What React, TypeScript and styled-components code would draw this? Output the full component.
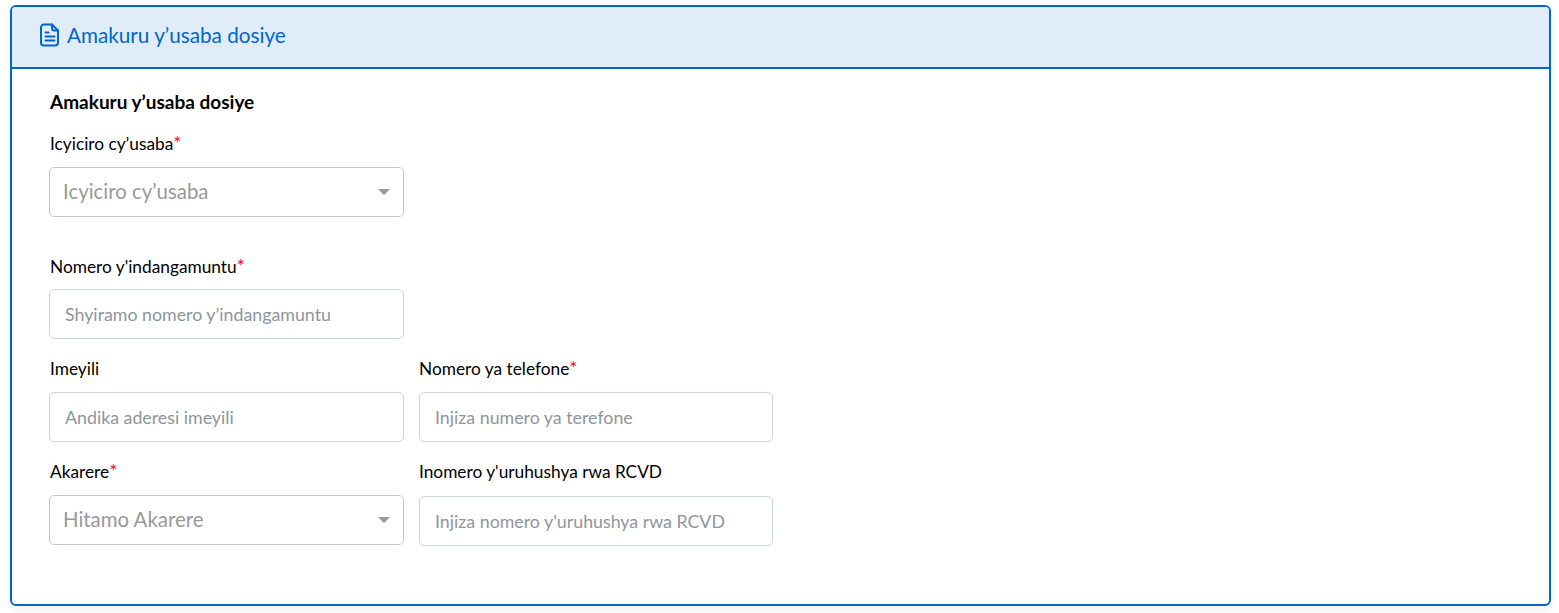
import React from "react";
import styled, { createGlobalStyle } from "styled-components";

const Global = createGlobalStyle`
  html, body { margin: 0; padding: 0; background: #fff; }
  body { font-family: "Lato", "Open Sans", sans-serif; color: #000; }
  * { box-sizing: border-box; }
`;

const Page = styled.div`
  width: 1559px;
  height: 613px;
  padding: 5px 8px 7px 10px;
`;

const Card = styled.section`
  height: 601px;
  border: 2px solid #0066cc;
  border-radius: 6px;
  box-shadow: 0 4px 8px rgba(0, 0, 0, 0.06);
  overflow: hidden;
`;

const CardHeader = styled.header`
  height: 62px;
  border-bottom: 2px solid #0066cc;
  background: #e0ecf8;
  display: flex;
  align-items: center;
  gap: 6px;
  padding: 0 0 4px 27px;
  color: #0066cc;
  font-size: 20.7px;
`;

const CardBody = styled.div`
  padding: 22px 37px 0;
`;

const SectionTitle = styled.h2`
  margin: 0 0 21px 1px;
  font-size: 19px;
  line-height: 22px;
  font-weight: 700;
`;

const Row = styled.div<{ $gap: number }>`
  display: grid;
  grid-template-columns: 355px 354px;
  column-gap: 15px;
  margin-bottom: ${(p) => p.$gap}px;
`;

const Field = styled.div`
  display: flex;
  flex-direction: column;
`;

const Label = styled.label<{ $gap: number }>`
  font-size: 17.3px;
  line-height: 20px;
  margin-bottom: ${(p) => p.$gap}px;
  ${Field}:first-child > & { padding-left: 1px; }
`;

const Star = styled.span`
  color: #f5033f;
  font-size: 19px;
  line-height: 0;
`;

const TextInput = styled.input<{ $top?: number }>`
  width: 100%;
  height: 50px;
  margin-top: ${(p) => p.$top ?? 0}px;
  padding: 0 15px;
  border: 1px solid #ced4da;
  border-radius: 5px;
  outline: none;
  background: #fff;
  font-family: inherit;
  font-size: 17.8px;
  &::placeholder { color: #8f959b; opacity: 1; }
`;

const SelectBox = styled.div`
  height: 50px;
  padding: 0 13px;
  border: 1px solid #c4c8cc;
  border-radius: 5px;
  display: flex;
  align-items: center;
  justify-content: space-between;
  color: #999;
  font-size: 20.4px;
`;

const SelectText = styled.span`
  margin-bottom: 2px;
`;

const Caret = styled.span`
  width: 0;
  height: 0;
  border-left: 6px solid transparent;
  border-right: 6px solid transparent;
  border-top: 6px solid #999;
`;

const DocIcon = () => (
  <svg width="22" height="24" viewBox="0 0 22 24" fill="none" stroke="#0066cc" strokeWidth="2" strokeLinejoin="round" strokeLinecap="round">
    <path d="M13 1.5H5a3 3 0 0 0-3 3v15a3 3 0 0 0 3 3h11a3 3 0 0 0 3-3V7.5z" />
    <path d="M13 1.5v4a2 2 0 0 0 2 2h4" />
    <path d="M6.5 9.5h3M6.5 13.5h9M6.5 17.5h9" />
  </svg>
);

const Select = ({ text }: { text: string }) => (
  <SelectBox>
    <SelectText>{text}</SelectText>
    <Caret />
  </SelectBox>
);

export default function App() {
  return (
    <Page>
      <Global />
      <Card>
        <CardHeader>
          <DocIcon />
          Amakuru y’usaba dosiye
        </CardHeader>
        <CardBody>
          <SectionTitle>Amakuru y’usaba dosiye</SectionTitle>
          <Row $gap={40}>
            <Field>
              <Label $gap={13}>Icyiciro cy’usaba<Star>*</Star></Label>
              <Select text="Icyiciro cy’usaba" />
            </Field>
          </Row>
          <Row $gap={20}>
            <Field>
              <Label $gap={12}>Nomero y'indangamuntu<Star>*</Star></Label>
              <TextInput placeholder="Shyiramo nomero y’indangamuntu" />
            </Field>
          </Row>
          <Row $gap={20}>
            <Field>
              <Label $gap={13}>Imeyili</Label>
              <TextInput placeholder="Andika aderesi imeyili" />
            </Field>
            <Field>
              <Label $gap={13}>Nomero ya telefone<Star>*</Star></Label>
              <TextInput placeholder="Injiza numero ya terefone" />
            </Field>
          </Row>
          <Row $gap={0}>
            <Field>
              <Label $gap={13}>Akarere<Star>*</Star></Label>
              <Select text="Hitamo Akarere" />
            </Field>
            <Field>
              <Label $gap={13}>Inomero y'uruhushya rwa RCVD</Label>
              <TextInput $top={1} placeholder="Injiza nomero y'uruhushya rwa RCVD" />
            </Field>
          </Row>
        </CardBody>
      </Card>
    </Page>
  );
}
